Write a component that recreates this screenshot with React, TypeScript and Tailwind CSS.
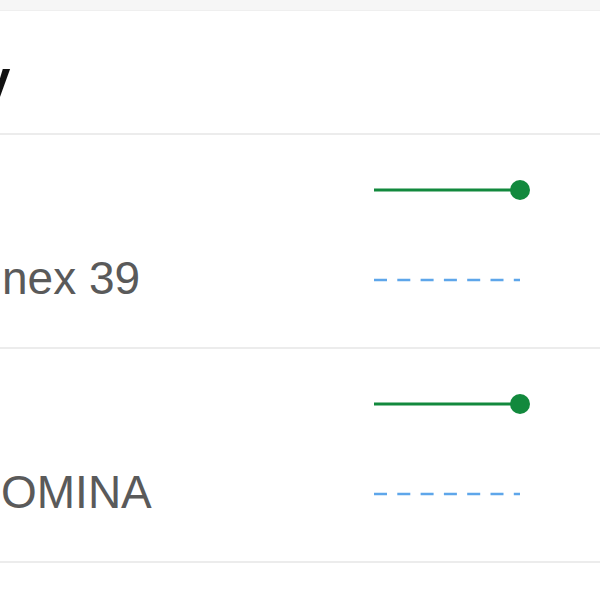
import React from 'react';

interface RowProps {
  label: string;
  offset: string;
}

const GREEN = '#12893d';
const BLUE = '#5ea6ea';

const Row: React.FC<RowProps> = ({ label, offset }) => {
  return (
    <div className="h-[214px] border-b-2 border-[#ececec] pt-[45px]">
      {/* Solid line with end dot */}
      <div className="flex justify-end pr-[70px] h-[20px]">
        <svg width="156" height="20" viewBox="0 0 156 20">
          <line x1="0" y1="10" x2="146" y2="10" stroke={GREEN} strokeWidth="3" />
          <circle cx="146" cy="10" r="10" fill={GREEN} />
        </svg>
      </div>

      {/* Label + dashed line */}
      <div className="mt-[52px] h-[52px] flex items-center justify-between pr-[78px]">
        <span
          className={`${offset} text-[46px] leading-[52px] text-[#5a5a5a] whitespace-nowrap`}
          style={{ fontFamily: '"Liberation Sans", Arial, sans-serif' }}
        >
          {label}
        </span>
        <svg className="mt-[3px]" width="148" height="4" viewBox="0 0 148 4">
          <line x1="0" y1="2" x2="146" y2="2" stroke={BLUE} strokeWidth="2.5" strokeDasharray="13 10.3" />
        </svg>
      </div>
    </div>
  );
};

const App: React.FC = () => {
  return (
    <div className="w-[600px] h-[600px] overflow-hidden bg-white">
      {/* Previous card edge */}
      <div className="h-[11px] bg-[#f6f6f6] border-b border-[#efefef]" />

      {/* Header */}
      <div className="h-[124px] border-b-2 border-[#ececec] pt-[39px] overflow-hidden">
        <h1
          className="ml-[-18px] text-[51px] leading-[60px] font-bold text-[#111] whitespace-nowrap"
          style={{ fontFamily: '"Liberation Sans", Arial, sans-serif' }}
        >
          y
        </h1>
      </div>

      <Row label="nex 39" offset="ml-[2px]" />
      <Row label="OMINA" offset="ml-[1px]" />
    </div>
  );
};

export default App;
